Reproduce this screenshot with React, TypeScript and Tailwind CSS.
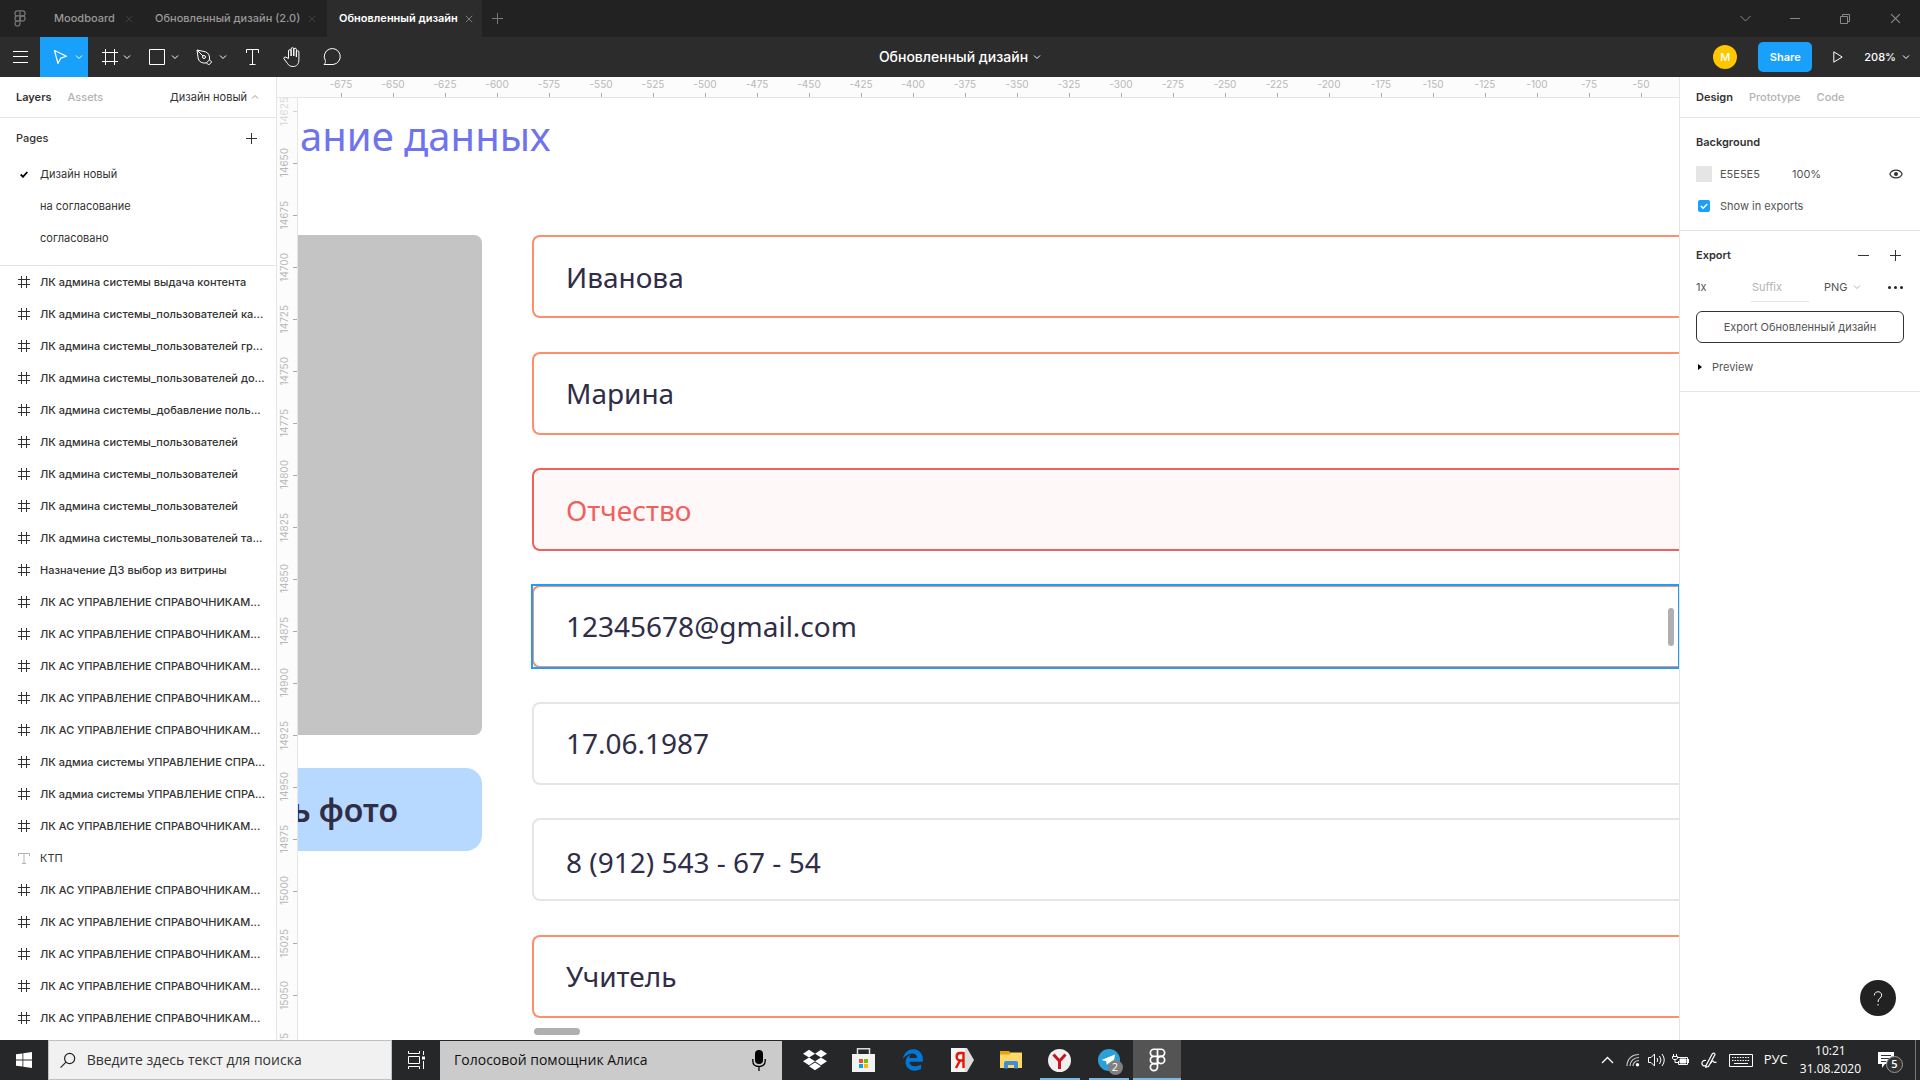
import React from 'react';
import { FaDropbox, FaEdgeLegacy } from 'react-icons/fa6';

type IconProps = { className?: string };

const Chevron = ({ className = '' }: IconProps) => (
  <svg className={className} width="8" height="6" viewBox="0 0 8 6" fill="none" stroke="currentColor">
    <path d="M1 1.5l3 3 3-3" />
  </svg>
);

const FigmaLogo = ({ className = '', w = 13 }: IconProps & { w?: number }) => (
  <svg className={className} width={w} height={w * 1.4} viewBox="0 0 20 28" fill="none" stroke="currentColor" strokeWidth="2">
    <path d="M10 1.5H5.8a4.2 4.2 0 000 8.4H10zM10 1.5h4.2a4.2 4.2 0 010 8.4H10zM10 9.9H5.8a4.2 4.2 0 000 8.4H10z" />
    <circle cx="14.2" cy="14.1" r="4.2" />
    <path d="M10 18.3H5.8a4.2 4.2 0 104.2 4.2z" />
  </svg>
);

const Close = ({ className = '', size = 9 }: IconProps & { size?: number }) => (
  <svg className={className} width={size} height={size} viewBox="0 0 10 10" fill="none" stroke="currentColor" strokeWidth="1.1">
    <path d="M1 1l8 8M9 1L1 9" />
  </svg>
);

const Plus = ({ className = '' }: IconProps) => (
  <svg className={className} width="11" height="11" viewBox="0 0 11 11" stroke="currentColor">
    <path d="M5.500 0v11M0 5.500h11" />
  </svg>
);

const FrameIcon = () => (
  <svg width="12" height="12" viewBox="0 0 12 12" stroke="#333" className="shrink-0">
    <path d="M3.500 0v12M8.500 0v12M0 3.500h12M0 8.500h12" />
  </svg>
);

const layers = [
  'ЛК админа системы выдача контента',
  'ЛК админа системы_пользователей ка...',
  'ЛК админа системы_пользователей гр...',
  'ЛК админа системы_пользователей до...',
  'ЛК админа системы_добавление поль...',
  'ЛК админа системы_пользователей',
  'ЛК админа системы_пользователей',
  'ЛК админа системы_пользователей',
  'ЛК админа системы_пользователей та...',
  'Назначение ДЗ выбор из витрины',
  'ЛК АС УПРАВЛЕНИЕ СПРАВОЧНИКАМ...',
  'ЛК АС УПРАВЛЕНИЕ СПРАВОЧНИКАМ...',
  'ЛК АС УПРАВЛЕНИЕ СПРАВОЧНИКАМ...',
  'ЛК АС УПРАВЛЕНИЕ СПРАВОЧНИКАМ...',
  'ЛК АС УПРАВЛЕНИЕ СПРАВОЧНИКАМ...',
  'ЛК адмиа системы УПРАВЛЕНИЕ СПРА...',
  'ЛК адмиа системы УПРАВЛЕНИЕ СПРА...',
  'ЛК АС УПРАВЛЕНИЕ СПРАВОЧНИКАМ...',
  'КТП',
  'ЛК АС УПРАВЛЕНИЕ СПРАВОЧНИКАМ...',
  'ЛК АС УПРАВЛЕНИЕ СПРАВОЧНИКАМ...',
  'ЛК АС УПРАВЛЕНИЕ СПРАВОЧНИКАМ...',
  'ЛК АС УПРАВЛЕНИЕ СПРАВОЧНИКАМ...',
  'ЛК АС УПРАВЛЕНИЕ СПРАВОЧНИКАМ...',
];

function TabBar() {
  return (
    <header className="flex h-[37px] shrink-0 items-center justify-between bg-[#222] text-[11px] font-medium text-[#999]">
      <div className="flex h-full items-center">
        <button aria-label="Home" className="flex w-10 justify-center text-[#777]">
          <FigmaLogo w={12} />
        </button>
        <div className="flex h-full w-[101px] items-center justify-between pl-[14px] pr-2">
          <button>Moodboard</button>
          <button aria-label="Close Moodboard" className="text-[#444]"><Close size={8} /></button>
        </div>
        <div className="flex h-full w-[186px] items-center justify-between pl-[14px] pr-[11px]">
          <button className="whitespace-nowrap">Обновленный дизайн (2.0)</button>
          <button aria-label="Close Обновленный дизайн (2.0)" className="text-[#444]"><Close size={8} /></button>
        </div>
        <div className="flex h-full w-[155px] items-center justify-between bg-[#2c2c2c] pl-3 pr-[9px] font-semibold text-white">
          <button className="whitespace-nowrap">Обновленный дизайн</button>
          <button aria-label="Close Обновленный дизайн" className="text-[#888]"><Close size={8} /></button>
        </div>
        <button aria-label="New tab" className="ml-[10px] text-[#777]"><Plus /></button>
      </div>
      <div className="flex items-center text-[#888]">
        <button aria-label="Tabs" className="flex w-[50px] justify-center">
          <svg width="11" height="7" viewBox="0 0 11 7" fill="none" stroke="currentColor"><path d="M.5 1l5 5 5-5" /></svg>
        </button>
        <button aria-label="Minimize" className="flex w-[50px] justify-center"><span className="h-px w-[10px] bg-[#888]" /></button>
        <button aria-label="Restore" className="flex w-[50px] justify-center">
          <svg width="10" height="10" viewBox="0 0 10 10" fill="none" stroke="currentColor"><path d="M.5 2.500h7v7h-7zM2.500 2.500v-2h7v7h-2" /></svg>
        </button>
        <button aria-label="Close" className="flex w-[50px] justify-center"><Close size={11} /></button>
      </div>
    </header>
  );
}

function Toolbar() {
  return (
    <nav aria-label="Tools" className="grid h-10 shrink-0 grid-cols-[1fr_auto_1fr] items-center bg-[#2c2c2c] text-white">
      <div className="flex h-full items-center">
        <button aria-label="Menu" className="flex h-full w-10 items-center justify-center">
          <svg width="15" height="12" viewBox="0 0 15 12" stroke="#fff"><path d="M0 .5h15M0 5.500h15M0 11.500h15" /></svg>
        </button>
        <button aria-label="Move" className="flex h-full w-12 items-center justify-end gap-[7px] bg-[#18a0fb] pr-[5px]">
          <svg width="15" height="16" viewBox="0 0 15 16" fill="none" stroke="currentColor" strokeWidth="1.200"><path d="M1.500 1.500l3.500 13 2.800-5.400 5.700-1.900z" strokeLinejoin="round" /></svg>
          <Chevron />
        </button>
        <button aria-label="Frame" className="flex h-full w-12 items-center justify-end gap-[5px] pr-[5px]">
          <svg width="16" height="16" viewBox="0 0 16 16" stroke="currentColor"><path d="M3.500 0v16M12.500 0v16M0 3.500h16M0 12.500h16" /></svg>
          <Chevron />
        </button>
        <button aria-label="Rectangle" className="flex h-full w-12 items-center justify-end gap-[6px] pr-[5px]">
          <svg width="16" height="16" viewBox="0 0 16 16" fill="none" stroke="currentColor"><path d="M.5.5h15v15H.5z" /></svg>
          <Chevron />
        </button>
        <button aria-label="Pen" className="flex h-full w-12 items-center justify-end gap-[6px] pr-[5px]">
          <svg width="17" height="17" viewBox="0 0 17 17" fill="none" stroke="currentColor"><path d="M1 1l8.500 1.800c3 1 4.500 4 4 8l-3.200 3.200c-4 .5-7-1-8-4zM1 1l6 6M13.200 10.500l2.500 2.500-3 3-2.500-2.500" strokeLinejoin="round" /><circle cx="8" cy="8" r="1.500" /></svg>
          <Chevron />
        </button>
        <button aria-label="Text" className="flex h-full w-10 items-center justify-center">
          <svg width="13" height="16" viewBox="0 0 13 16" fill="none" stroke="currentColor"><path d="M.5 4V.5h12V4M6.500.5v15M3.500 15.500h6" /></svg>
        </button>
        <button aria-label="Hand" className="flex h-full w-10 items-center justify-center">
          <svg width="18" height="20" viewBox="0 0 18 20" fill="none" stroke="currentColor"><path d="M5.500 11.500V4a1.300 1.300 0 012.600 0v5V2a1.300 1.300 0 012.700 0v7V2.500a1.300 1.300 0 012.600 0V10 5a1.200 1.200 0 012.500 0v7.500c0 4.500-2 7-5.800 7-2.600 0-4.300-.8-5.600-3L1 11.800c-.6-1.200.8-2.300 2-1.500z" strokeLinejoin="round" /></svg>
        </button>
        <button aria-label="Comment" className="flex h-full w-10 items-center justify-center">
          <svg width="19" height="18" viewBox="0 0 19 18" fill="none" stroke="currentColor"><path d="M1 16.500c1.500-1.500 1.600-2.500 1.300-4A8 8 0 1110 16.500z" strokeLinejoin="round" /></svg>
        </button>
      </div>
      <button className="flex items-center gap-[5px] text-sm font-medium">Обновленный дизайн<Chevron /></button>
      <div className="flex items-center justify-end pr-[10px]">
        <span className="mr-[21px] flex size-6 items-center justify-center rounded-full bg-[#ffc700] text-[11px] font-medium">M</span>
        <button className="h-[30px] w-[54px] rounded-[5px] bg-[#18a0fb] text-[11px] font-semibold">Share</button>
        <button aria-label="Present" className="mx-[21px]">
          <svg width="10" height="12" viewBox="0 0 10 12" fill="none" stroke="currentColor"><path d="M.8.8v10.400L9.200 6z" /></svg>
        </button>
        <button className="flex items-center gap-[6px] text-[11px] font-medium">208%<Chevron /></button>
      </div>
    </nav>
  );
}

function LeftPanel() {
  return (
    <aside className="flex w-[277px] shrink-0 flex-col overflow-hidden border-r border-[#e5e5e5] bg-white text-[11px] text-[#333]">
      <div className="flex h-[41px] shrink-0 items-center border-b border-[#e5e5e5] pl-4 pr-[17px] font-medium">
        <button className="font-semibold">Layers</button>
        <button className="ml-4 text-[#b3b3b3]">Assets</button>
        <button className="ml-auto flex items-center gap-1 font-normal">Дизайн новый<Chevron className="rotate-180 text-[#999]" /></button>
      </div>
      <section className="h-[148px] shrink-0 border-b border-[#e5e5e5]">
        <div className="flex h-10 items-center justify-between pl-4 pr-[19px]">
          <h2 className="font-medium">Pages</h2>
          <button aria-label="Add page"><Plus /></button>
        </div>
        {['Дизайн новый', 'на согласование', 'согласовано'].map((p, i) => (
          <button key={p} className="flex h-8 w-full items-center pl-5">
            <span className="w-5">
              {i === 0 && <svg width="8" height="7" viewBox="0 0 8 7" fill="none" stroke="#000" strokeWidth="1.800"><path d="M.7 3.500L3 5.800 7.300 1" /></svg>}
            </span>
            {p}
          </button>
        ))}
      </section>
      <ul className="font-medium">
        {layers.map((name, i) => (
          <li key={i}>
            <button className="flex h-8 w-full items-center gap-[10px] whitespace-nowrap pl-[18px]">
              {name === 'КТП' ? (
                <svg width="12" height="11" viewBox="0 0 12 11" fill="none" stroke="#b3b3b3" className="shrink-0"><path d="M.5 3V.5h11V3M6 .5v10M4 10.500h4" /></svg>
              ) : (
                <FrameIcon />
              )}
              <span className={name === 'КТП' ? 'font-normal' : ''}>{name}</span>
            </button>
          </li>
        ))}
      </ul>
    </aside>
  );
}

const hTicks = Array.from({ length: 26 }, (_, i) => -675 + i * 25);
const vTicks = Array.from({ length: 19 }, (_, i) => 14625 + i * 25);

type Tone = 'orange' | 'red' | 'selected' | 'grey';
const tones: Record<Tone, string> = {
  orange: 'border-[#ff8f6b] text-[#302d47]',
  red: 'border-[#f0605c] bg-[#fff8f8] text-[#f0605c]',
  selected: 'border-[#ff8f6b] text-[#302d47] outline-2 -outline-offset-1 outline-[#18a0fb]',
  grey: 'border-[#e5e5e5] text-[#302d47]',
};
const fields: { label: string; value: string; tone: Tone; pad?: string }[] = [
  { label: 'Фамилия', value: 'Иванова', tone: 'orange' },
  { label: 'Имя', value: 'Марина', tone: 'orange' },
  { label: 'Отчество', value: 'Отчество', tone: 'red' },
  { label: 'Почта', value: '12345678@gmail.com', tone: 'selected' },
  { label: 'Дата рождения', value: '17.06.1987', tone: 'grey' },
  { label: 'Телефон', value: '8 (912) 543 - 67 - 54', tone: 'grey', pad: 'pt-1' },
  { label: 'Должность', value: 'Учитель', tone: 'orange' },
];

function Canvas() {
  return (
    <main className="flex min-w-0 flex-1 flex-col overflow-hidden bg-white">
      <div className="flex h-[21px] shrink-0 overflow-hidden border-b border-[#e5e5e5] bg-[#fcfcfc] pl-[38px] text-[10px] leading-[14px] text-[#b8b8b8]">
        {hTicks.map((n) => (
          <div key={n} className="flex w-[52px] shrink-0 flex-col items-center justify-between">
            <span>{n}</span>
            <span className="h-1 w-px bg-[#aaa]" />
          </div>
        ))}
      </div>
      <div className="flex min-h-0 flex-1">
        <div className="w-[21px] shrink-0 overflow-hidden border-r border-[#e5e5e5] bg-[#fcfcfc] text-[10px] leading-[14px] text-[#b8b8b8]">
          <div className="-mt-[13px]">
            {vTicks.map((n, i) => (
              <div key={n} className={`flex h-[52px] items-center justify-between ${i === 0 ? 'opacity-50' : ''}`}>
                <span className="rotate-180 [writing-mode:vertical-rl]">{n}</span>
                <span className="h-px w-1 bg-[#aaa]" />
              </div>
            ))}
          </div>
        </div>
        <div className="relative min-w-0 flex-1 overflow-hidden font-['Noto_Sans',sans-serif]">
          <h1 className="h-[137px] pl-[2px] pt-[11px] text-[40px] leading-[54px] text-[#7073ee]">ание данных</h1>
          <div className="flex">
            <div className="flex w-[184px] shrink-0 flex-col gap-[33px]">
              <div className="h-[500px] rounded-r-lg bg-[#c4c4c4]" />
              <button className="flex h-[83px] items-center justify-end overflow-hidden whitespace-nowrap rounded-r-2xl bg-[#b8d9ff] pr-[84px] text-[32px] font-semibold text-[#302d47]">ь фото</button>
            </div>
            <div className="ml-[50px] flex h-[783px] flex-1 flex-col justify-between">
              {fields.map((f) => (
                <div key={f.label} className={f.tone === 'selected' ? 'h-[83px] outline-2 -outline-offset-1 outline-[#18a0fb]' : 'h-[83px]'}>
                  <input
                    aria-label={f.label}
                    defaultValue={f.value}
                    className={`block h-full w-full rounded-l-lg border-2 border-r-0 pl-8 text-[28px] ${f.tone === 'selected' ? tones.orange : tones[f.tone]} ${f.pad ?? ''}`}
                  />
                </div>
              ))}
            </div>
          </div>
          <span className="absolute bottom-[5px] left-[236px] h-[7px] w-[46px] rounded-full bg-[#afafaf]" />
          <span className="absolute right-[5px] top-[510px] h-[38px] w-[6px] rounded-full bg-[#afafaf]" />
        </div>
      </div>
    </main>
  );
}

function RightPanel() {
  return (
    <aside className="relative w-[241px] shrink-0 border-l border-[#e5e5e5] bg-white text-[11px] text-[#555]">
      <div className="flex h-[41px] items-center gap-4 border-b border-[#e5e5e5] pl-4 font-medium text-[#b3b3b3]">
        <button className="font-semibold text-[#333]">Design</button>
        <button>Prototype</button>
        <button>Code</button>
      </div>
      <section className="h-[113px] border-b border-[#e5e5e5] px-4 pt-2">
        <h2 className="flex h-8 items-center font-semibold text-[#333]">Background</h2>
        <div className="flex h-8 items-center">
          <span className="mr-2 size-4 bg-[#e5e5e5]" />
          <span className="w-[72px]">E5E5E5</span>
          <span>100%</span>
          <button aria-label="Toggle background" className="ml-auto mr-[1px]">
            <svg width="14" height="10" viewBox="0 0 14 10" fill="none" stroke="#333" strokeWidth="1.200"><path d="M.8 5C3-.2 11-.2 13.200 5 11 10.200 3 10.200.8 5z" /><circle cx="7" cy="5" r="2" fill="#333" stroke="none" /></svg>
          </button>
        </div>
        <label className="flex h-8 items-center pl-[2px]">
          <span className="relative mr-[10px] flex size-3">
            <input type="checkbox" defaultChecked className="size-3 appearance-none rounded-[2px] bg-[#18a0fb]" />
            <svg className="pointer-events-none absolute inset-0" width="12" height="12" viewBox="0 0 12 12" fill="none" stroke="#fff" strokeWidth="1.600"><path d="M2.800 6l2.300 2.200L9.300 4" /></svg>
          </span>
          Show in exports
        </label>
      </section>
      <section className="h-[161px] border-b border-[#e5e5e5] px-4 pt-2">
        <div className="flex h-8 items-center">
          <h2 className="font-semibold text-[#333]">Export</h2>
          <button aria-label="Remove export" className="ml-auto flex h-3 items-center"><span className="h-px w-[11px] bg-[#333]" /></button>
          <button aria-label="Add export" className="ml-[21px] mr-[3px] text-[#333]"><Plus /></button>
        </div>
        <div className="flex h-8 items-center">
          <button className="w-[55px] text-left">1x</button>
          <input aria-label="Suffix" placeholder="Suffix" className="h-[29px] w-[58px] border-b border-[#e5e5e5] pl-px placeholder:text-[#b3b3b3]" />
          <button className="ml-[15px] flex items-center gap-[5px]">PNG<Chevron className="text-[#b3b3b3]" /></button>
          <button aria-label="More" className="ml-auto mr-[1px]">
            <svg width="15" height="3" viewBox="0 0 15 3" fill="#222"><circle cx="1.500" cy="1.500" r="1.500" /><circle cx="7.500" cy="1.500" r="1.500" /><circle cx="13.500" cy="1.500" r="1.500" /></svg>
          </button>
        </div>
        <button className="mt-2 block h-8 w-full rounded-md border border-[#333]">Export Обновленный дизайн</button>
        <button className="mt-2 flex h-8 items-center gap-[10px] pl-[2px]">
          <svg width="4" height="6" viewBox="0 0 4 6" fill="#000"><path d="M0 0l4 3-4 3z" /></svg>
          Preview
        </button>
      </section>
      <button aria-label="Help" className="absolute bottom-6 right-6 flex size-9 items-center justify-center rounded-full bg-[#222]">
        <svg width="10" height="15" viewBox="0 0 10 15" fill="none" stroke="#fff"><path d="M1.300 4.300C1.300-.4 8.700-.4 8.700 4.200 8.700 7 5 7.200 5 11M5 13v1.500" /></svg>
      </button>
    </aside>
  );
}

const task = 'flex h-full w-[49px] shrink-0 items-center justify-center';

function Taskbar() {
  return (
    <footer className="flex h-10 shrink-0 items-center bg-[#262728] font-['Open_Sans',sans-serif] text-white">
      <button aria-label="Start" className="flex h-full w-12 shrink-0 items-center justify-center">
        <svg width="16" height="16" viewBox="0 0 16 16" fill="#fff"><path d="M0 2.300l6.500-.9v6.200H0zM7.300 1.300L16 0v7.600H7.300zM0 8.400h6.500v6.200L0 13.700zM7.300 8.400H16V16l-8.700-1.300z" /></svg>
      </button>
      <label className="flex h-full w-[344px] shrink-0 items-center border border-[#c0c0c0] bg-[#f1f1f1] pl-[11px] text-[#222]">
        <svg width="17" height="17" viewBox="0 0 17 17" fill="none" stroke="#222" strokeWidth="1.300"><circle cx="10.500" cy="6.300" r="5.500" /><path d="M6.500 10.300L.6 16.300" /></svg>
        <input placeholder="Введите здесь текст для поиска" aria-label="Поиск" className="ml-[11px] w-full bg-transparent text-sm placeholder:text-[#333]" />
      </label>
      <button aria-label="Task view" className="flex h-full w-12 shrink-0 items-center justify-center">
        <svg width="17" height="18" viewBox="0 0 17 18" fill="none" stroke="#fff"><path d="M.5 0v2.500h11V0M.5 5.500h11v7H.5zM.5 18v-2.500h11V18M15.500 0v4M15.500 10v8" /><path d="M14 5.500h3v3h-3z" fill="#fff" stroke="none" /></svg>
      </button>
      <label className="flex h-[39px] w-[342px] shrink-0 items-center bg-[#cbcbcb] pl-[14px] pr-4">
        <input aria-label="Алиса" placeholder="Голосовой помощник Алиса" className="min-w-0 flex-1 bg-transparent text-sm placeholder:text-[#111]" />
        <svg width="14" height="21" viewBox="0 0 14 21" fill="none" stroke="#000" strokeWidth="1.300"><rect x="3" y="0" width="8" height="14" rx="4" fill="#000" stroke="none" /><path d="M.8 9v2c0 3.500 2.500 5.500 6.200 5.500s6.200-2 6.200-5.500V9M7 16.500V21" /></svg>
      </label>
      <div className="ml-2 flex h-full items-center">
        <button aria-label="Dropbox" className={task}><FaDropbox size={24} /></button>
        <button aria-label="Store" className={task}>
          <svg width="23" height="24" viewBox="0 0 23 24"><path d="M5.500 7V.8h12V7" fill="none" stroke="#ddd" strokeWidth="1.500" /><path d="M0 6h23v18H0z" fill="#f2f2f2" /><path d="M7 11h4v4H7z" fill="#f25022" /><path d="M12 11h4v4h-4z" fill="#7fba00" /><path d="M7 16h4v4H7z" fill="#00a4ef" /><path d="M12 16h4v4h-4z" fill="#ffb900" /></svg>
        </button>
        <button aria-label="Edge" className={task}><FaEdgeLegacy size={22} color="#0078d7" /></button>
        <button aria-label="Yandex" className={task}>
          <svg width="24" height="24" viewBox="0 0 24 24"><path d="M1 0h16l7 12-7 12H1z" fill="#ddd" /><path d="M1 0h14v24H1z" fill="#f4f4f4" /><path d="M13.500 4v16M13.500 5H10c-4.500 0-4.500 7.500 0 7.500h3.500M10 12.500L6 20" fill="none" stroke="#e61400" strokeWidth="2.400" /></svg>
        </button>
        <button aria-label="Explorer" className={task}>
          <svg width="22" height="18" viewBox="0 0 22 18"><path d="M0 0h9l2 2v4H0z" fill="#e5a50a" /><path d="M0 3.500h9l2-2h11V17H0z" fill="#ffd867" /><path d="M4 17.500V12q0-2 2-2h10q2 0 2 2v5.500h-4V14H8v3.500z" fill="#3d8fd6" /></svg>
        </button>
        <button aria-label="Yandex Browser" className={task}>
          <span className="flex h-full w-10 items-center justify-center border-b-2 border-[#76b9ed] pt-[2px]">
            <svg width="23" height="23" viewBox="0 0 23 23"><circle cx="11.500" cy="11.500" r="11.500" fill="#f0f0f0" /><path d="M5.500 5.500l6 6.500 6-6.500M11.500 12v8" fill="none" stroke="#cc1420" strokeWidth="3" /></svg>
          </span>
        </button>
        <button aria-label="Telegram" className={task}>
          <span className="relative flex h-full w-10 items-center justify-center border-b-2 border-[#76b9ed] pt-[2px]">
            <svg width="22" height="22" viewBox="0 0 22 22"><circle cx="11" cy="11" r="11" fill="#2ca0d9" /><path d="M3.500 11L17 5.500 15 17l-4.200-3-2 2-.6-3.700z" fill="#fff" /></svg>
            <span className="absolute bottom-[3px] right-[6px] flex size-[15px] items-center justify-center rounded-full bg-[#808080] text-[11px]">2</span>
          </span>
        </button>
        <button aria-label="Figma" className="flex h-full w-12 items-center justify-center border-b-2 border-[#76b9ed] bg-[#545454] pt-[2px]"><FigmaLogo w={17} /></button>
      </div>
      <div className="ml-auto flex h-full items-center">
        <button aria-label="Hidden icons">
          <svg width="13" height="8" viewBox="0 0 13 8" fill="none" stroke="#fff" strokeWidth="1.300"><path d="M1 7l5.500-5.500L12 7" /></svg>
        </button>
        <svg className="ml-[12px]" width="14" height="14" viewBox="0 0 14 14" fill="none" stroke="#ccc" strokeWidth="1.200"><path d="M1 13C1 6 6 1.500 13 1.500M4 13c0-5 4-8.500 9-8.500M7 13c0-3 2.500-5.500 6-5.500" /><circle cx="11.500" cy="11.800" r="1.700" fill="#fff" stroke="none" /></svg>
        <svg className="ml-[8px]" width="17" height="14" viewBox="0 0 17 14" fill="none" stroke="#fff"><path d="M.5 4.500h2.500L6.500 1v12L3 9.500H.5zM9 5q1.500 2 0 4M11.500 3q3 4 0 8M14 1q4.500 6 0 12" /></svg>
        <svg className="ml-[7px]" width="17" height="13" viewBox="0 0 17 13" fill="none" stroke="#fff"><path d="M5.500 3.500h10v7h-9V7" /><path d="M8 5h6v4H8zM16 5.500h1v3h-1z" fill="#fff" /><path d="M1.500 0v2.500M4.500 0v2.500M.5 2.500h5v2l-1.500 1H2L.5 4.500zM3 6v2.500h3" /></svg>
        <svg className="ml-[12px]" width="16" height="16" viewBox="0 0 16 16" fill="none" stroke="#fff" strokeWidth="1.200"><path d="M5 13.500L11.500 1.500q2.500-1 2.500 1L7.500 14.500 4.800 15.200zM5 8.500c-3-.5-4.500 1.500-4 3.500s2.500 2.500 5 1M9 11.500c1 .5 1.500-2.500 3-2.500s0 2.500 3.500 1" /></svg>
        <svg className="ml-[12px]" width="24" height="13" viewBox="0 0 24 13" fill="none" stroke="#fff"><path d="M.5.5h23v12H.5z" /><path d="M3 3.500h18M3 6.500h18" strokeDasharray="1.500 1.100" /><path d="M5 9.500h14" /></svg>
        <span className="ml-[11px] text-[13px]">РУС</span>
        <div className="ml-[12px] text-center text-[12px] leading-[18px]">
          <div>10:21</div>
          <div>31.08.2020</div>
        </div>
        <button aria-label="Notifications" className="relative ml-[17px] mr-[11px] h-6 w-[26px]">
          <svg width="17" height="16" viewBox="0 0 17 16"><path d="M0 0h16v12H7l-3 4v-4H0z" fill="#fff" /><path d="M3 3.500h10M3 6.500h10M3 9.500h5" stroke="#333" /></svg>
          <span className="absolute -bottom-[1px] right-[1px] flex size-[17px] items-center justify-center rounded-full border border-[#999] bg-[#333] text-[11px] font-semibold">5</span>
        </button>
        <span className="mr-1 h-full w-px bg-[#777]" />
      </div>
    </footer>
  );
}

export default function App() {
  return (
    <div className="flex h-screen flex-col overflow-hidden bg-white font-['Inter',sans-serif]">
      <TabBar />
      <Toolbar />
      <div className="flex min-h-0 flex-1">
        <LeftPanel />
        <Canvas />
        <RightPanel />
      </div>
      <Taskbar />
    </div>
  );
}
